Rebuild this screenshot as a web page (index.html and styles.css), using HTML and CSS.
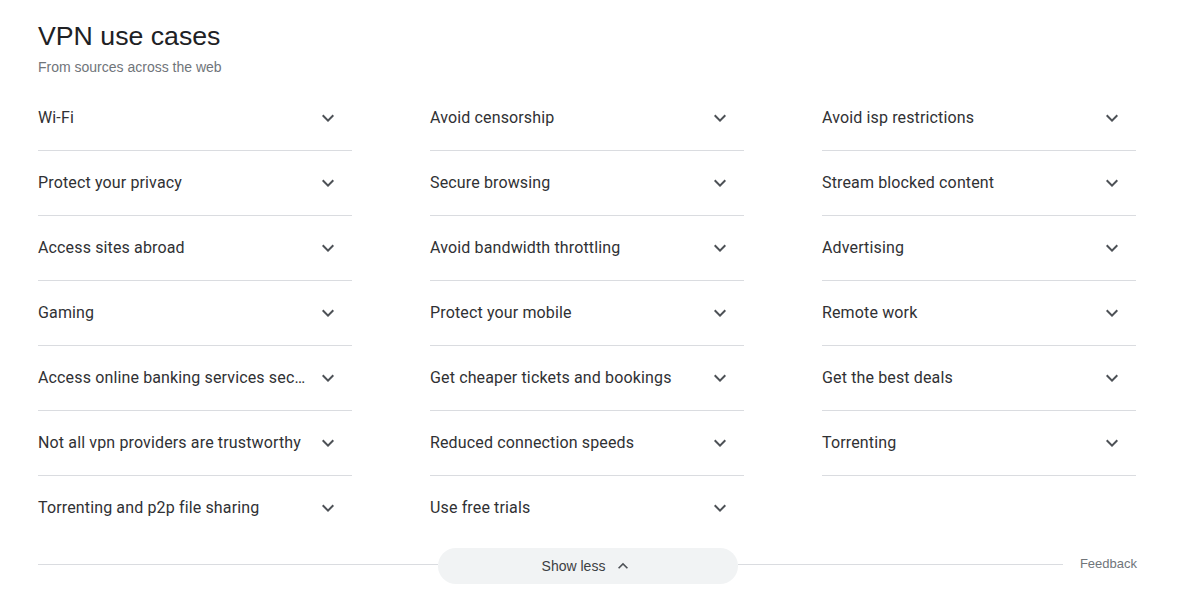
FILE: index.html
```html
<!DOCTYPE html>
<html lang="en">
<head>
    <meta charset="UTF-8">
    <meta name="viewport" content="width=device-width, initial-scale=1.0">
    <title>VPN use cases</title>
    <link rel="stylesheet" href="styles.css">
</head>
<body>

    <div class="block">
        <h2 class="title">VPN use cases</h2>
        <div class="subtitle">From sources across the web</div>

        <div class="grid">
            <div class="item"><span class="label">Wi-Fi</span><svg class="chev" viewBox="0 0 24 24"><path d="M16.59 8.59L12 13.17 7.41 8.59 6 10l6 6 6-6z"/></svg></div>
            <div class="item"><span class="label">Avoid censorship</span><svg class="chev" viewBox="0 0 24 24"><path d="M16.59 8.59L12 13.17 7.41 8.59 6 10l6 6 6-6z"/></svg></div>
            <div class="item"><span class="label">Avoid isp restrictions</span><svg class="chev" viewBox="0 0 24 24"><path d="M16.59 8.59L12 13.17 7.41 8.59 6 10l6 6 6-6z"/></svg></div>

            <div class="item"><span class="label">Protect your privacy</span><svg class="chev" viewBox="0 0 24 24"><path d="M16.59 8.59L12 13.17 7.41 8.59 6 10l6 6 6-6z"/></svg></div>
            <div class="item"><span class="label">Secure browsing</span><svg class="chev" viewBox="0 0 24 24"><path d="M16.59 8.59L12 13.17 7.41 8.59 6 10l6 6 6-6z"/></svg></div>
            <div class="item"><span class="label">Stream blocked content</span><svg class="chev" viewBox="0 0 24 24"><path d="M16.59 8.59L12 13.17 7.41 8.59 6 10l6 6 6-6z"/></svg></div>

            <div class="item"><span class="label">Access sites abroad</span><svg class="chev" viewBox="0 0 24 24"><path d="M16.59 8.59L12 13.17 7.41 8.59 6 10l6 6 6-6z"/></svg></div>
            <div class="item"><span class="label">Avoid bandwidth throttling</span><svg class="chev" viewBox="0 0 24 24"><path d="M16.59 8.59L12 13.17 7.41 8.59 6 10l6 6 6-6z"/></svg></div>
            <div class="item"><span class="label">Advertising</span><svg class="chev" viewBox="0 0 24 24"><path d="M16.59 8.59L12 13.17 7.41 8.59 6 10l6 6 6-6z"/></svg></div>

            <div class="item"><span class="label">Gaming</span><svg class="chev" viewBox="0 0 24 24"><path d="M16.59 8.59L12 13.17 7.41 8.59 6 10l6 6 6-6z"/></svg></div>
            <div class="item"><span class="label">Protect your mobile</span><svg class="chev" viewBox="0 0 24 24"><path d="M16.59 8.59L12 13.17 7.41 8.59 6 10l6 6 6-6z"/></svg></div>
            <div class="item"><span class="label">Remote work</span><svg class="chev" viewBox="0 0 24 24"><path d="M16.59 8.59L12 13.17 7.41 8.59 6 10l6 6 6-6z"/></svg></div>

            <div class="item"><span class="label" title="Access online banking services securely">Access online banking services sec…</span><svg class="chev" viewBox="0 0 24 24"><path d="M16.59 8.59L12 13.17 7.41 8.59 6 10l6 6 6-6z"/></svg></div>
            <div class="item"><span class="label">Get cheaper tickets and bookings</span><svg class="chev" viewBox="0 0 24 24"><path d="M16.59 8.59L12 13.17 7.41 8.59 6 10l6 6 6-6z"/></svg></div>
            <div class="item"><span class="label">Get the best deals</span><svg class="chev" viewBox="0 0 24 24"><path d="M16.59 8.59L12 13.17 7.41 8.59 6 10l6 6 6-6z"/></svg></div>

            <div class="item"><span class="label">Not all vpn providers are trustworthy</span><svg class="chev" viewBox="0 0 24 24"><path d="M16.59 8.59L12 13.17 7.41 8.59 6 10l6 6 6-6z"/></svg></div>
            <div class="item"><span class="label">Reduced connection speeds</span><svg class="chev" viewBox="0 0 24 24"><path d="M16.59 8.59L12 13.17 7.41 8.59 6 10l6 6 6-6z"/></svg></div>
            <div class="item"><span class="label">Torrenting</span><svg class="chev" viewBox="0 0 24 24"><path d="M16.59 8.59L12 13.17 7.41 8.59 6 10l6 6 6-6z"/></svg></div>

            <div class="item last"><span class="label">Torrenting and p2p file sharing</span><svg class="chev" viewBox="0 0 24 24"><path d="M16.59 8.59L12 13.17 7.41 8.59 6 10l6 6 6-6z"/></svg></div>
            <div class="item last"><span class="label">Use free trials</span><svg class="chev" viewBox="0 0 24 24"><path d="M16.59 8.59L12 13.17 7.41 8.59 6 10l6 6 6-6z"/></svg></div>
        </div>

        <div class="footer">
            <div class="rule"></div>
            <button class="toggle">Show less <svg class="up" viewBox="0 0 24 24"><path d="M12 8l-6 6 1.41 1.41L12 10.83l4.59 4.58L18 14z"/></svg></button>
            <div class="side">
                <div class="rule"></div>
                <a class="feedback" href="#">Feedback</a>
            </div>
        </div>
    </div>

</body>
</html>
```

FILE: styles.css
```css
body {
    margin: 0;
    background-color: #fff;
    font-family: "Liberation Sans", Arial, sans-serif;
    color: #202124;
}
.block {
    width: 1099px;
    padding: 20px 0 0 38px;
}
.title {
    margin: 0;
    font-size: 26.7px;
    font-weight: normal;
    line-height: 32px;
    color: #202124;
}
.subtitle {
    margin-top: 5px;
    font-size: 14px;
    line-height: 20px;
    color: #70757a;
}
.grid {
    margin-top: 9px;
    display: grid;
    grid-template-columns: repeat(3, 314px);
    column-gap: 78px;
}
.item {
    height: 64px;
    display: flex;
    align-items: center;
    border-bottom: 1px solid #dadce0;
    font-family: Roboto, "Liberation Sans", sans-serif;
    font-size: 16px;
    letter-spacing: 0.14px;
    color: #303134;
}
.item.last {
    border-bottom: none;
}
.label {
    flex: 1;
    white-space: nowrap;
    margin-bottom: 2px;
}
.chev {
    width: 24px;
    height: 24px;
    margin: 0 12px 0 8px;
    fill: #4d5156;
    flex-shrink: 0;
}
.footer {
    margin-top: 8px;
    display: grid;
    grid-template-columns: 1fr 300px 1fr;
    align-items: center;
    height: 36px;
}
.side {
    display: flex;
    align-items: center;
}
.rule {
    flex: 1;
    height: 1px;
    margin-bottom: 4px;
    background-color: #dadce0;
}
.toggle {
    width: 300px;
    height: 36px;
    border: none;
    border-radius: 18px;
    background-color: #f1f3f4;
    font-family: "Liberation Sans", Arial, sans-serif;
    font-size: 14px;
    color: #3c4043;
    display: flex;
    align-items: center;
    justify-content: center;
    gap: 8px;
    padding: 0;
    cursor: pointer;
}
.up {
    width: 20px;
    height: 20px;
    fill: #4d5156;
}
.feedback {
    margin: 0 0 6px 17px;
    font-size: 13px;
    color: #70757a;
    text-decoration: none;
}
```
